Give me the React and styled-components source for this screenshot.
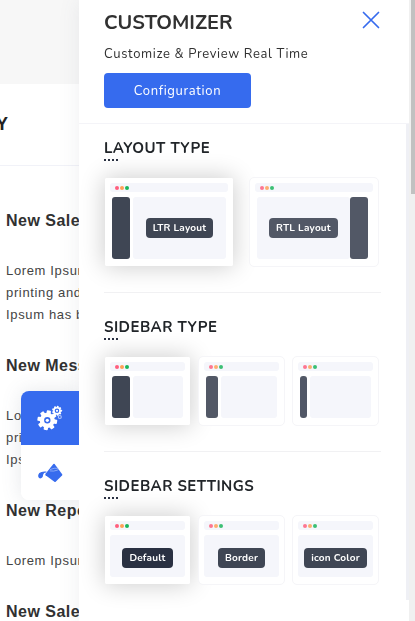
import React from "react";
import styled, { createGlobalStyle } from "styled-components";

const Global = createGlobalStyle`
  * { box-sizing: border-box; }
  body { margin: 0; background: #fff; overflow: hidden; color: #313131; }
  h1, h2, h3, p { margin: 0; }
  button { font: inherit; border: 0; padding: 0; background: none; cursor: pointer; }
`;

const Page = styled.div`
  height: 100vh;
  overflow: hidden;
  font-family: "Liberation Sans", Arial, sans-serif;
`;

const Hero = styled.div`
  height: 84px;
  background: #f7f7f7;
`;

const PageHead = styled.header`
  height: 82px;
  display: flex;
  align-items: center;
  border-bottom: 1px solid #f1f2f8;
`;

const PageTitle = styled.h2`
  font-size: 18px;
  line-height: 26px;
  margin-left: -4px;
  padding-bottom: 2px;
  color: #222;
`;

const Feed = styled.main`
  padding: 44px 0 0 6px;
`;

const Post = styled.article`
  padding-bottom: 29px;
  white-space: nowrap;

  h3 {
    font-size: 16px;
    line-height: 22px;
    letter-spacing: 0.03em;
    margin-bottom: 28px;
  }
  p {
    font-size: 13px;
    line-height: 22px;
    letter-spacing: 0.05em;
    color: #444;
  }
`;

const Drawer = styled.aside`
  position: fixed;
  top: 0;
  right: 6px;
  bottom: 0;
  width: 330px;
  display: flex;
  flex-direction: column;
  background: #fff;
  box-shadow: 0 0 20px rgba(89, 102, 122, 0.1);
  font-family: Nunito, "Nunito Sans", "Open Sans", sans-serif;
`;

const Tabs = styled.nav`
  position: absolute;
  right: 100%;
  top: 391px;
  width: 58px;
  border-radius: 8px 0 0 8px;
  overflow: hidden;
  background: #fff;
  box-shadow: 0 0 20px rgba(89, 102, 122, 0.15);
  clip-path: inset(-30px 0 -30px -30px);
`;

const Tab = styled.button`
  display: flex;
  align-items: center;
  justify-content: center;
  width: 100%;
  height: ${(p) => (p.$active ? 54 : 55)}px;
  background: ${(p) => (p.$active ? "#366bee" : "#fff")};
`;

const DrawerHead = styled.header`
  display: flex;
  align-items: flex-start;
  justify-content: space-between;
  height: 124px;
  padding: 11px 29px 0 25px;
  border-bottom: 1px solid #f4f4f8;
`;

const Title = styled.h1`
  font-size: 20px;
  line-height: 24px;
  font-weight: 700;
  color: #313131;
`;

const Subtitle = styled.p`
  margin: 9px 0;
  font-size: 13px;
  line-height: 20px;
  letter-spacing: 0.05em;
`;

const Primary = styled.button`
  && {
    width: 147px;
    height: 35px;
    border-radius: 4px;
    background: #366bee;
    color: #fff;
    font-size: 13px;
    letter-spacing: 0.05em;
  }
`;

const Close = styled.button`
  display: flex;
`;

const DrawerBody = styled.div`
  height: 476px;
  padding: 14px 25px 0;
  border-right: 3px solid #eff0f5;
`;

const Section = styled.section`
  padding-bottom: 25px;

  & + & {
    border-top: 1px solid #f1f1f3;
    padding-top: 24px;
  }
`;

const SectionTitle = styled.h2`
  font-size: 15px;
  line-height: 20px;
  font-weight: 700;
  letter-spacing: 0.03em;
  color: #212529;
`;

const Dots = styled.div`
  width: 14px;
  height: 2px;
  margin: 1px 0 16px;
  background: repeating-linear-gradient(90deg, #2a3142 0 2px, transparent 2px 4px);
`;

const Cards = styled.div`
  display: grid;
  grid-template-columns: repeat(${(p) => p.$cols}, 1fr);
  gap: ${(p) => (p.$cols === 2 ? 15 : 7)}px;
  padding-right: 2px;
`;

const Card = styled.button`
  && {
    padding: 5px 5px 7px;
    border: 1px solid ${(p) => (p.$active ? "transparent" : "#f5f5f8")};
    border-radius: ${(p) => (p.$active ? 3 : 5)}px;
    background: #fff;
    background-clip: padding-box;
    box-shadow: ${(p) => (p.$active ? "0 0 24px rgba(0, 0, 0, 0.2)" : "none")};
  }
`;

const Chrome = styled.span`
  display: flex;
  align-items: center;
  gap: 1px;
  height: 9px;
  padding: 1px 0 0 5px;
  margin-bottom: 5px;
  border-radius: 3px;
  background: #f5f6fb;
`;

const Light = styled.span`
  width: 4px;
  height: 4px;
  border-radius: 50%;
  background: ${(p) => p.$color};
  opacity: ${(p) => (p.$dim ? 0.85 : 1)};
`;

const Stage = styled.span`
  display: flex;
  flex-direction: ${(p) => (p.$reverse ? "row-reverse" : "row")};
  gap: ${(p) => (p.$reverse ? 0 : 3)}px;
  height: ${(p) => (p.$tall ? 62 : 42)}px;
  padding: ${(p) => (p.$reverse ? "0 5px 0 2px" : p.$full ? "0" : "0 2px")};
`;

const Rail = styled.span`
  width: ${(p) => p.$width}px;
  border-radius: 3px;
  background: ${(p) => (p.$dim ? "#525866" : "#3f4654")};
`;

const Canvas = styled.span`
  flex: 1;
  display: flex;
  align-items: center;
  justify-content: center;
  padding-top: ${(p) => (p.$full ? 4 : 0)}px;
  border-radius: 3px;
  background: #f5f6fb;
`;

const Badge = styled.span`
  padding: 0 7px;
  border-radius: 4px;
  background: ${(p) => p.$tone};
  color: #fff;
  font-size: 10px;
  line-height: 20px;
  font-weight: 700;
  letter-spacing: 0.02em;
  white-space: nowrap;
`;

const ScrollTrack = styled.div`
  position: fixed;
  top: 0;
  right: 0;
  bottom: 0;
  width: 6px;
  padding-left: 2px;
  background: #f0f0f0;
`;

const ScrollThumb = styled.div`
  height: 194px;
  background: #c1c1c1;
`;

const posts = [
  { title: "New Sale", lines: ["Lorem Ipsum is simply", "printing and typesetting", "Ipsum has been"] },
  { title: "New Message", lines: ["Lorem Ipsum is simply", "printing and typesetting", "Ipsum has been"] },
  { title: "New Report", lines: ["Lorem Ipsum is simply"] },
  { title: "New Sale", lines: [] },
];

const sections = [
  {
    title: "LAYOUT TYPE",
    cards: [
      { label: "LTR Layout", tone: "#3f4654", rail: 18 },
      { label: "RTL Layout", tone: "#525866", rail: 18, reverse: true },
    ],
  },
  { title: "SIDEBAR TYPE", cards: [{ rail: 18 }, { rail: 12 }, { rail: 7 }] },
  {
    title: "SIDEBAR SETTINGS",
    cards: [
      { label: "Default", tone: "#2a3142" },
      { label: "Border", tone: "#3f4654" },
      { label: "icon Color", tone: "#3f4654" },
    ],
  },
];

function Gear({ cx, cy, r, hole, teeth, tooth }) {
  return (
    <g transform={`translate(${cx} ${cy})`} fill="#fff">
      <circle r={(r + hole) / 2} fill="none" stroke="#fff" strokeWidth={r - hole} />
      {Array.from({ length: teeth }, (_, i) => (
        <rect
          key={i}
          x={-tooth / 2}
          y={-r - tooth * 0.55}
          width={tooth}
          height={tooth}
          rx={tooth * 0.2}
          transform={`rotate(${(i * 360) / teeth + 10})`}
        />
      ))}
    </g>
  );
}

function GearsIcon() {
  return (
    <svg width="26" height="26" viewBox="0 0 26 26">
      <Gear cx={10.3} cy={15.3} r={7.6} hole={3.2} teeth={8} tooth={4.2} />
      <circle cx="10.3" cy="15.3" r="1.6" fill="#fff" />
      <Gear cx={20} cy={5.8} r={3.9} hole={2.3} teeth={9} tooth={1.9} />
      <circle cx="20" cy="5.8" r="1.1" fill="#fff" />
      <circle cx="22.8" cy="12" r="1.5" fill="none" stroke="#b4c7f8" strokeWidth="1.1" />
    </svg>
  );
}

function BucketIcon() {
  return (
    <svg width="26" height="20" viewBox="0 0 26 20">
      <path d="M16.4 1Q17 .3 17.6 1L25.2 11.3Q25.6 12 25 12.6L18.7 18.7Q18.1 19.2 17.4 18.8L8.6 12.3Q7.9 11.6 8.5 10.8Z" fill="#366bee" />
      <path d="M9.6 8.5Q4.4 8 2.3 9.9Q.6 11.6 1.3 14Q2.5 16.3 4.5 15Q6.2 13.6 6.2 11.4Q6.6 9.9 9 9.6Z" fill="#366bee" />
      <path d="M13 6.6Q17.5 4.6 20.4 5.3Q22.6 6.1 20.3 7.2Q16.8 8.6 12.7 7.9" fill="none" stroke="#a9c0f8" strokeWidth="0.7" />
    </svg>
  );
}

function Preview({ card, active, tall }) {
  const full = !card.rail;
  return (
    <Card type="button" $active={active} aria-pressed={active}>
      <Chrome>
        {["#ff5f7e", "#ffa057", "#1bb55c"].map((c) => (
          <Light key={c} $color={c} $dim={!active} />
        ))}
      </Chrome>
      <Stage $tall={tall} $reverse={card.reverse} $full={full}>
        {card.rail && <Rail $width={card.rail} $dim={!active} />}
        <Canvas $full={full}>{card.label && <Badge $tone={card.tone}>{card.label}</Badge>}</Canvas>
      </Stage>
    </Card>
  );
}

export default function App() {
  return (
    <>
      <Global />
      <Page>
        <Hero />
        <PageHead>
          <PageTitle>Y</PageTitle>
        </PageHead>
        <Feed>
          {posts.map((post, i) => (
            <Post key={i}>
              <h3>{post.title}</h3>
              {post.lines.map((line) => (
                <p key={line}>{line}</p>
              ))}
            </Post>
          ))}
        </Feed>
      </Page>
      <Drawer>
        <Tabs>
          <Tab type="button" $active aria-label="Settings"><GearsIcon /></Tab>
          <Tab type="button" aria-label="Colors"><BucketIcon /></Tab>
        </Tabs>
        <DrawerHead>
          <div>
            <Title>CUSTOMIZER</Title>
            <Subtitle>Customize &amp; Preview Real Time</Subtitle>
            <Primary type="button">Configuration</Primary>
          </div>
          <Close type="button" aria-label="Close">
            <svg width="18" height="18" viewBox="0 0 18 18">
              <path d="M1.5 1.5L16.5 16.5M16.5 1.5L1.5 16.5" stroke="#366bee" strokeWidth="1.7" strokeLinecap="round" />
            </svg>
          </Close>
        </DrawerHead>
        <DrawerBody>
          {sections.map((section, i) => (
            <Section key={section.title}>
              <SectionTitle>{section.title}</SectionTitle>
              <Dots />
              <Cards $cols={section.cards.length}>
                {section.cards.map((card, j) => (
                  <Preview key={j} card={card} active={j === 0} tall={i === 0} />
                ))}
              </Cards>
            </Section>
          ))}
        </DrawerBody>
      </Drawer>
      <ScrollTrack>
        <ScrollThumb />
      </ScrollTrack>
    </>
  );
}
